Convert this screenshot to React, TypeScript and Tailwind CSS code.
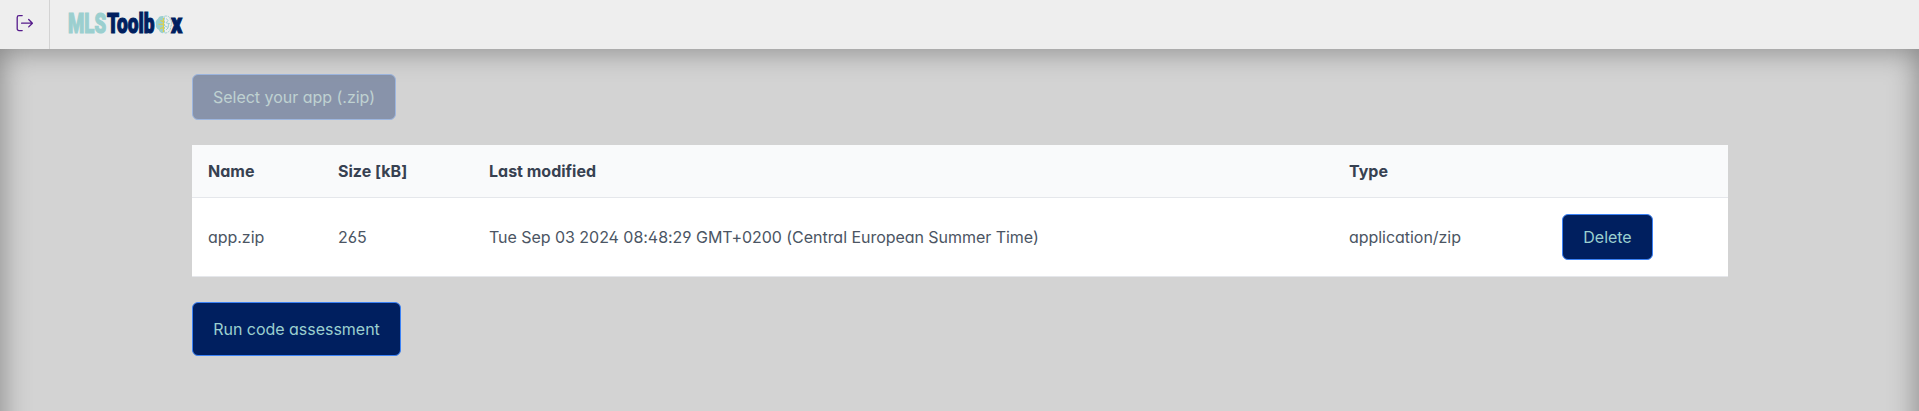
import React from "react";

const columns = ["Name", "Size [kB]", "Last modified", "Type", ""];

const file = {
  name: "app.zip",
  size: "265",
  modified: "Tue Sep 03 2024 08:48:29 GMT+0200 (Central European Summer Time)",
  type: "application/zip",
};

function SignOutIcon() {
  return (
    <svg width="18" height="18" viewBox="0 0 18 18" fill="none" stroke="#551a8b" strokeWidth="1.3" strokeLinecap="round" strokeLinejoin="round">
      <path d="M6.2 1.6H3A1.8 1.8 0 0 0 1.2 3.4V14.8A1.8 1.8 0 0 0 3 16.6H6.2" />
      <path d="M5.6 9.2H16.4M12.7 5.5L16.4 9.2L12.7 12.9" />
    </svg>
  );
}

function Logo() {
  return (
    <svg width="118" height="40" viewBox="0 0 118 40" className="font-['Roboto',sans-serif] font-black">
      <g fontSize="28.5" strokeWidth="1.2">
        <text x="0" y="29.2" textLength="38.2" lengthAdjust="spacingAndGlyphs" fill="#9bcfcf" stroke="#9bcfcf">MLS</text>
        <text x="39" y="29.2" textLength="47.6" lengthAdjust="spacingAndGlyphs" fill="#001f5f" stroke="#001f5f">Toolb</text>
        <text x="103" y="29.2" textLength="11.2" lengthAdjust="spacingAndGlyphs" fill="#001f5f" stroke="#001f5f">x</text>
      </g>
      <path d="M95.6 12.2C92.5 11.6 90.5 12.8 90 14.8C88 16 87.2 18.5 88 20.6C87.4 23 88.8 25.2 90.8 25.8C91.6 28.4 94 29.6 95.6 29Z" fill="#9bcfcf" />
      <path d="M96.5 12.2C100 11.4 102.2 13.2 102.4 15.6C104.2 17.6 104 20.6 102.8 22.4C102.8 26.4 100 29.4 96.5 29Z" fill="#eeeeee" stroke="#9bcfcf" strokeWidth="1" strokeDasharray="2.4 0.8" />
      <path d="M98 14.5L100.2 16.5L98 18.8L102 19.8M97 22L100.4 23.6L98 26M100.4 20V23" fill="none" stroke="#9bcfcf" strokeWidth="1" />
      <path d="M95.4 14V28M90.5 20.2H95.4M92.4 16.4L95 17.4M92 24.4L95 23.4" stroke="#e0d040" strokeWidth="1.1" fill="none" />
    </svg>
  );
}

function Button({ children, className = "" }: { children: React.ReactNode; className?: string }) {
  return (
    <button className={`block whitespace-nowrap rounded-md border border-[#3b82f6] bg-[#001f5f] px-[19px] tracking-[-0.02px] text-[#9bcfcf] ${className}`}>
      {children}
    </button>
  );
}

export default function App() {
  return (
    <div className="flex h-[411px] flex-col overflow-hidden bg-[#d3d3d3] font-['Inter',sans-serif] text-base leading-5 [font-feature-settings:'cv02','cv03','cv04','cv11']">
      <header className="flex h-[49px] shrink-0 bg-[#eeeeee]">
        <a href="#" aria-label="Sign out" className="flex w-[50px] items-center border-r border-[#d3d3d3] pb-[3px] pl-4">
          <SignOutIcon />
        </a>
        <div className="pt-1 pl-[18px]">
          <Logo />
        </div>
      </header>
      <main className="h-[500px] shrink-0 pt-[25px] pr-[191px] pl-48 shadow-[inset_0_0_30px_gray]">
        <Button className="h-[46px] w-[204px] opacity-35">Select your app (.zip)</Button>
        <table className="mt-[25px] w-full table-fixed border-separate border-spacing-0 bg-white text-left">
          <colgroup>
            <col className="w-[130px]" />
            <col className="w-[151px]" />
            <col className="w-[860px]" />
            <col className="w-[213px]" />
            <col />
          </colgroup>
          <thead>
            <tr className="bg-[#f9fafb] text-[#374151]">
              {columns.map((label) => (
                <th key={label} className="h-[53px] border-b border-[#e5e7eb] px-4 py-0 font-bold">{label}</th>
              ))}
            </tr>
          </thead>
          <tbody>
            <tr className="tracking-[-0.04px] text-[#4b5563] [&>td]:h-[79px] [&>td]:border-b [&>td]:border-[#e5e7eb] [&>td]:px-4 [&>td]:py-0">
              <td>{file.name}</td>
              <td>{file.size}</td>
              <td>{file.modified}</td>
              <td>{file.type}</td>
              <td>
                <Button className="h-[46px] w-[91px]">Delete</Button>
              </td>
            </tr>
          </tbody>
        </table>
        <Button className="mt-[25px] h-[54px] w-[209px]">Run code assessment</Button>
      </main>
    </div>
  );
}
